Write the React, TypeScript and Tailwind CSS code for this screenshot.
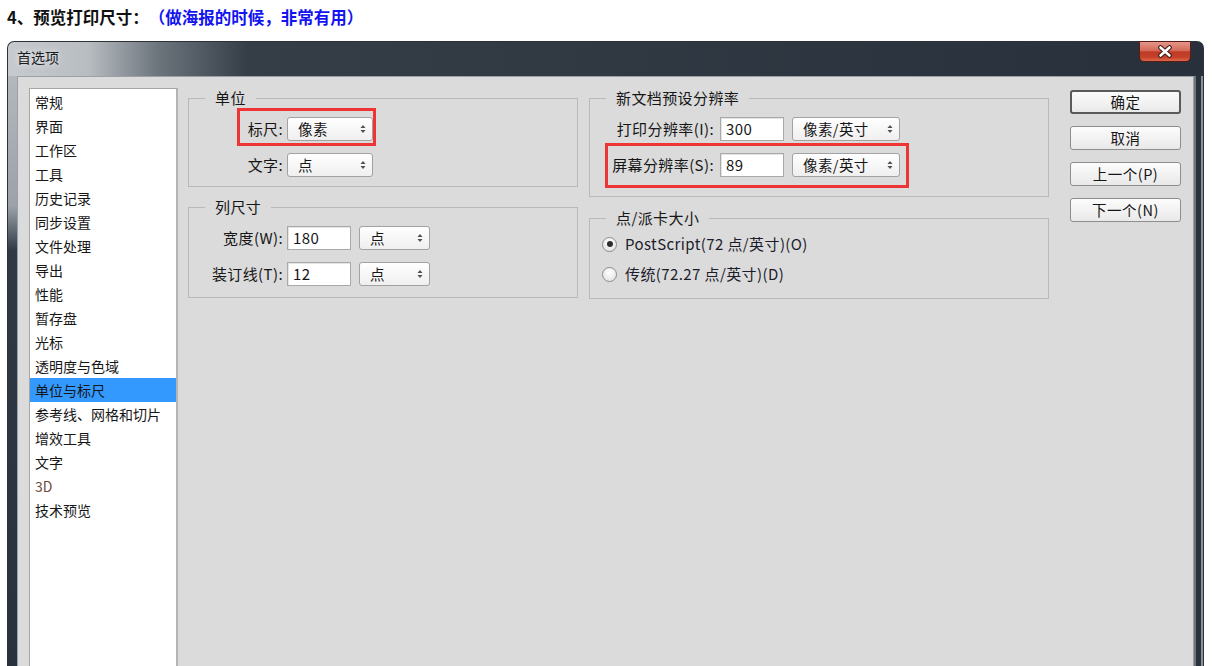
import React from "react";

function Arrows() {
  return (
    <svg width="6" height="10" viewBox="0 0 6 10" className="shrink-0">
      <path d="M0.5 4 L3 1 L5.5 4 Z" fill="#505050" />
      <path d="M0.5 6 L3 9 L5.5 6 Z" fill="#505050" />
    </svg>
  );
}

function Select({ value, className }: { value: string; className: string }) {
  return (
    <div
      className={`h-[24px] flex items-center justify-between rounded-[3px] border border-[#a2a2a2] bg-[linear-gradient(to_bottom,#ffffff,#efefef)] pl-[10px] pr-[6px] text-[14.5px] ${className}`}
    >
      <span>{value}</span>
      <Arrows />
    </div>
  );
}

function Field({ value, className }: { value: string; className: string }) {
  return (
    <div
      className={`h-[24px] flex items-center border border-[#a9a9a9] bg-white pl-[5px] shadow-[inset_1px_1px_0_#e4e4e4] ${className}`}
    >
      {value}
    </div>
  );
}

function Group({
  title,
  children,
}: {
  title: string;
  children: React.ReactNode;
}) {
  return (
    <fieldset className="border border-[#b9b9b9] text-[15px] tracking-[0.4px]">
      <legend className="ml-[16px] px-[10px] leading-[20px]">{title}</legend>
      {children}
    </fieldset>
  );
}

function Radio({ checked, label }: { checked: boolean; label: string }) {
  return (
    <div className="flex items-center h-[20px]">
      <div className="w-[15px] h-[15px] rounded-full border border-[#8d8d8d] bg-[radial-gradient(circle_at_50%_35%,#ffffff,#dedede)] flex items-center justify-center">
        {checked && <div className="w-[6px] h-[6px] rounded-full bg-[#2e2e2e]" />}
      </div>
      <span className="ml-[8px] text-[#1c1c2c]">{label}</span>
    </div>
  );
}

const items = [
  "常规",
  "界面",
  "工作区",
  "工具",
  "历史记录",
  "同步设置",
  "文件处理",
  "导出",
  "性能",
  "暂存盘",
  "光标",
  "透明度与色域",
  "单位与标尺",
  "参考线、网格和切片",
  "增效工具",
  "文字",
  "3D",
  "技术预览",
];

function Button({ label, primary }: { label: string; primary?: boolean }) {
  return (
    <div
      className={`h-[24px] flex items-center justify-center rounded-[3px] bg-[linear-gradient(to_bottom,#fcfcfc,#e9e9e9)] text-[14.5px] tracking-[0.5px] ${
        primary ? "border-2 border-[#5a5a5a]" : "border border-[#8e8e8e]"
      }`}
    >
      {label}
    </div>
  );
}

export default function App() {
  return (
    <div className="w-[1212px] h-[666px] overflow-hidden bg-white font-['Noto_Sans_CJK_SC',sans-serif] text-[14px] text-[#161616] [text-spacing-trim:space-all]">
      <div className="pl-[7px] pt-[6px] h-[29px] text-[16.5px] leading-[23px] font-bold">
        <span className="text-[#111111]">4、预览打印尺寸：</span>
        <span className="text-[#1414f0]">（做海报的时候，非常有用）</span>
      </div>

      <div className="relative ml-[7px] mt-[12px] w-[1197px] h-[640px] flex flex-col rounded-t-[7px] border border-b-0 border-[#2c3238] bg-[linear-gradient(to_right,#c7cbd0_0px,#b8bdc2_80px,#6c747c_150px,#353e47_240px,#28313b_100%)]">
        <div className="h-[34px] flex items-center pl-[9px] pb-[3px] text-[#1c1c1c] [text-shadow:0_0_6px_rgba(255,255,255,0.9)]">
          首选项
        </div>

        <div className="absolute right-[12px] top-[-1px] w-[52px] h-[21px] rounded-b-[5px] border border-[#5b1b12] bg-[linear-gradient(to_bottom,#e4968a_0%,#d46a5a_45%,#bf3a26_52%,#c4412b_80%,#de6a4c_100%)] flex items-center justify-center">
          <svg width="16" height="13" viewBox="0 0 16 13">
            <path d="M3.5 2.5 L12.5 10.5 M12.5 2.5 L3.5 10.5" stroke="#3a1a14" strokeWidth="4.6" strokeLinecap="round" />
            <path d="M3.5 2.5 L12.5 10.5 M12.5 2.5 L3.5 10.5" stroke="#ffffff" strokeWidth="2.6" strokeLinecap="round" />
          </svg>
        </div>

        <div className="flex flex-1 min-h-0">
          <div className="w-[9px] bg-[linear-gradient(to_bottom,#b3b8bd_0px,#9ca2a8_130px,#2e3945_175px,#27323d_100%)]" />

          <div className="w-[1177px] bg-[#dbdbdb] border-t border-l border-r border-[#9aa0a6] flex pt-[11px] pl-[11px]">
            {/* list */}
            <div className="w-[149px] self-stretch border border-[#a6a6a6] border-r-2 border-r-[#b4b4b4] bg-white pt-[1px]">
              {items.map((it) => (
                <div
                  key={it}
                  className={`h-[24px] leading-[24px] pl-[5px] ${
                    it === "单位与标尺" ? "bg-[#3399ff]" : ""
                  } ${it === "3D" ? "text-[#6b4a3b]" : ""}`}
                >
                  {it}
                </div>
              ))}
            </div>

            {/* column 1 */}
            <div className="ml-[10px] w-[390px] flex flex-col gap-[10px]">
              <Group title="单位">
                <div className="pt-[9px] pb-[9px] flex flex-col gap-[12px]">
                  <div className="relative flex items-center w-fit">
                    <div className="w-[94px] text-right">标尺:</div>
                    <Select value="像素" className="ml-[4px] w-[86px]" />
                    <div className="absolute left-[48px] right-[-3px] top-[-9px] bottom-[-5px] border-[3px] border-[#ee3434]" />
                  </div>
                  <div className="flex items-center w-fit">
                    <div className="w-[94px] text-right">文字:</div>
                    <Select value="点" className="ml-[4px] w-[86px]" />
                  </div>
                </div>
              </Group>
              <Group title="列尺寸">
                <div className="pt-[9px] pb-[11px] flex flex-col gap-[12px]">
                  <div className="flex items-center w-fit">
                    <div className="w-[94px] text-right">宽度(W):</div>
                    <Field value="180" className="ml-[4px] w-[64px]" />
                    <Select value="点" className="ml-[8px] w-[71px]" />
                  </div>
                  <div className="flex items-center w-fit">
                    <div className="w-[94px] text-right">装订线(T):</div>
                    <Field value="12" className="ml-[4px] w-[64px]" />
                    <Select value="点" className="ml-[8px] w-[71px]" />
                  </div>
                </div>
              </Group>
            </div>

            {/* column 2 */}
            <div className="ml-[11px] w-[460px] flex flex-col gap-[11px]">
              <Group title="新文档预设分辨率">
                <div className="pt-[9px] pb-[19px] flex flex-col gap-[12px]">
                  <div className="flex items-center w-fit">
                    <div className="w-[124px] text-right">打印分辨率(I):</div>
                    <Field value="300" className="ml-[6px] w-[64px]" />
                    <Select value="像素/英寸" className="ml-[8px] w-[108px]" />
                  </div>
                  <div className="relative flex items-center w-fit">
                    <div className="w-[124px] text-right">屏幕分辨率(S):</div>
                    <Field value="89" className="ml-[6px] w-[64px]" />
                    <Select value="像素/英寸" className="ml-[8px] w-[108px]" />
                    <div className="absolute left-[15px] right-[-9px] top-[-10px] bottom-[-11px] border-[3px] border-[#ee3434]" />
                  </div>
                </div>
              </Group>
              <Group title="点/派卡大小">
                <div className="pt-[6px] pb-[14px] pl-[12px] flex flex-col gap-[10px]">
                  <Radio checked label="PostScript(72 点/英寸)(O)" />
                  <Radio checked={false} label="传统(72.27 点/英寸)(D)" />
                </div>
              </Group>
            </div>

            {/* buttons */}
            <div className="ml-[21px] w-[111px] pt-[2px] flex flex-col gap-[12px]">
              <Button label="确定" primary />
              <Button label="取消" />
              <Button label="上一个(P)" />
              <Button label="下一个(N)" />
            </div>
          </div>

          <div className="w-[9px] bg-[#27323c] border-l-2 border-l-[#70767c] border-r-2 border-r-[#8d9196]" />
        </div>
      </div>
    </div>
  );
}
